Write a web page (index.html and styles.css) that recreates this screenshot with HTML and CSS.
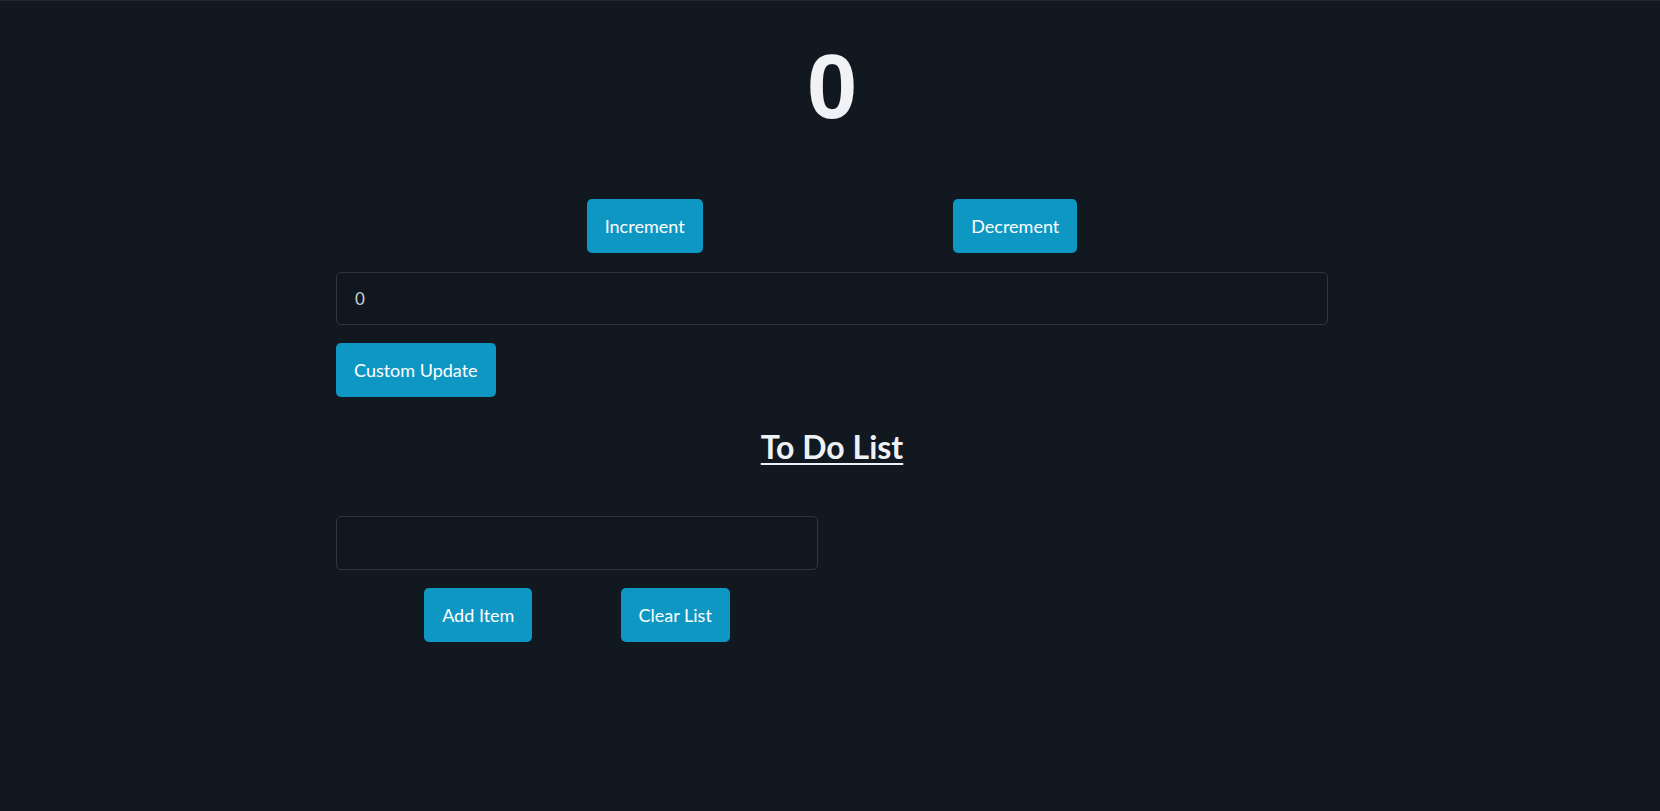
FILE: index.html
```html
<!DOCTYPE html>
<html lang="en">
<head>
<meta charset="utf-8">
<title>Counter</title>
<link rel="stylesheet" href="styles.css">
</head>
<body>
<main class="app">
  <h1 class="count">0</h1>
  <div class="counter-row">
    <button class="btn">Increment</button>
    <button class="btn">Decrement</button>
  </div>
  <input class="field field-wide" type="text" value="0">
  <div class="custom-row">
    <button class="btn">Custom Update</button>
  </div>
  <h2 class="todo-title">To Do List</h2>
  <div class="todo">
    <input class="field field-todo" type="text" value="">
    <div class="todo-row">
      <button class="btn">Add Item</button>
      <button class="btn">Clear List</button>
    </div>
  </div>
</main>
</body>
</html>
```

FILE: styles.css
```css
html, body {
  margin: 0;
  padding: 0;
  height: 100%;
}
body {
  background: #111820;
  border-top: 1px solid #1f2730;
  box-sizing: border-box;
  font-family: Lato, "Open Sans", sans-serif;
  color: #f0f2f5;
}
.app {
  box-sizing: border-box;
  width: 996px;
  padding-left: 4px;
  margin: 0 auto;
  display: flex;
  flex-direction: column;
}
.count {
  margin: 41px 0 0;
  font-family: "Liberation Sans", Arial, sans-serif;
  font-weight: 700;
  font-size: 91px;
  line-height: 90px;
  text-align: center;
  color: #f0f2f5;
}
.counter-row {
  margin-top: 67px;
  display: flex;
  justify-content: space-evenly;
}
.btn {
  height: 54px;
  padding: 0 18px;
  border: none;
  border-radius: 5px;
  background: #0f97c4;
  color: #ffffff;
  font-family: Lato, "Open Sans", sans-serif;
  font-size: 18px;
  cursor: pointer;
}
.field {
  box-sizing: border-box;
  height: 53px;
  background: #10171f;
  border: 1px solid #2e3741;
  border-radius: 5px;
  padding: 0 18px;
  color: #c9d1d9;
  font-family: Lato, "Open Sans", sans-serif;
  font-size: 17px;
  outline: none;
}
.field-wide {
  margin-top: 19px;
  width: 992px;
}
.custom-row {
  margin-top: 18px;
  display: flex;
}
.todo-title {
  margin: 30px 0 0;
  font-family: Lato, "Open Sans", sans-serif;
  font-weight: 700;
  font-size: 32px;
  line-height: 40px;
  text-align: center;
  text-decoration: underline;
  text-decoration-thickness: 2px;
  text-underline-offset: 4px;
  color: #eef1f5;
}
.todo {
  margin-top: 49px;
  width: 482px;
  display: flex;
  flex-direction: column;
}
.field-todo {
  width: 482px;
  height: 54px;
}
.todo-row {
  margin-top: 18px;
  display: flex;
  justify-content: space-evenly;
}
```
